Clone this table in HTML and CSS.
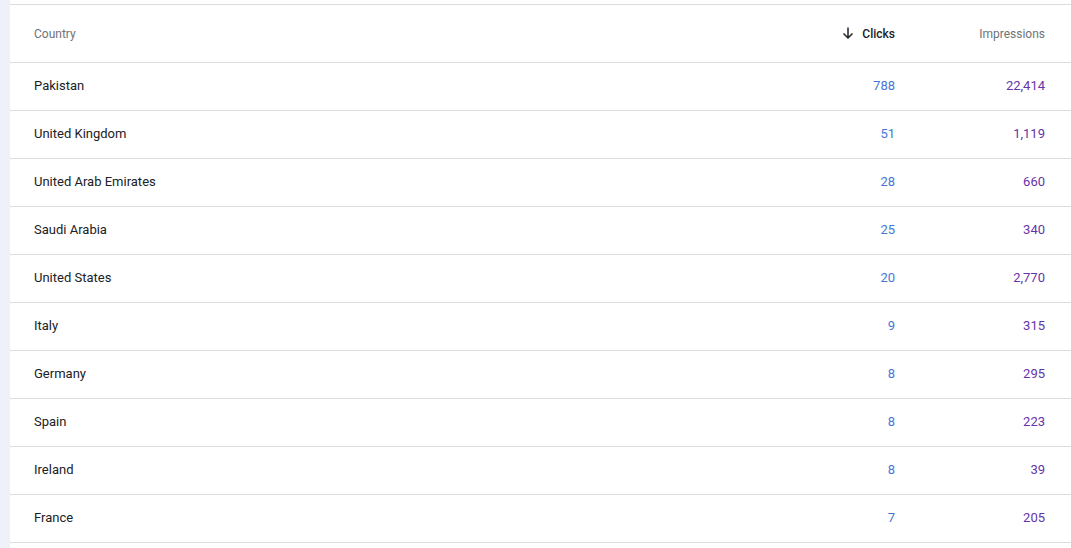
FILE: index.html
```html
<!DOCTYPE html>
<html>
<head>
<meta charset="utf-8">
<link rel="stylesheet" href="styles.css">
</head>
<body>
<div class="page">
  <div class="card">
    <table class="data">
      <thead>
        <tr>
          <th class="col-country">Country</th>
          <th class="col-num sorted"><svg class="arrow" width="14" height="14" viewBox="0 0 14 14"><path d="M7 1.5v10.5M2.5 7.5L7 12l4.5-4.5" fill="none" stroke="#202124" stroke-width="1.5"/></svg>Clicks</th>
          <th class="col-num col-imp">Impressions</th>
        </tr>
      </thead>
      <tbody>
        <tr><td>Pakistan</td><td class="clicks">788</td><td class="imp">22,414</td></tr>
        <tr><td>United Kingdom</td><td class="clicks">51</td><td class="imp">1,119</td></tr>
        <tr><td>United Arab Emirates</td><td class="clicks">28</td><td class="imp">660</td></tr>
        <tr><td>Saudi Arabia</td><td class="clicks">25</td><td class="imp">340</td></tr>
        <tr><td>United States</td><td class="clicks">20</td><td class="imp">2,770</td></tr>
        <tr><td>Italy</td><td class="clicks">9</td><td class="imp">315</td></tr>
        <tr><td>Germany</td><td class="clicks">8</td><td class="imp">295</td></tr>
        <tr><td>Spain</td><td class="clicks">8</td><td class="imp">223</td></tr>
        <tr><td>Ireland</td><td class="clicks">8</td><td class="imp">39</td></tr>
        <tr><td>France</td><td class="clicks">7</td><td class="imp">205</td></tr>
      </tbody>
    </table>
  </div>
</div>
</body>
</html>
```

FILE: styles.css
```css
html, body {
  margin: 0;
  padding: 0;
  background: #eef2f8;
  font-family: Roboto, "Liberation Sans", Arial, sans-serif;
}

.page {
  padding-left: 10px;
  height: 548px;
  overflow: hidden;
}

.card {
  background: #ffffff;
  padding-top: 4px;
  min-height: 544px;
}

.data {
  width: 100%;
  border-collapse: collapse;
  border-top: 1px solid #dadce0;
}

.data th,
.data td {
  border-bottom: 1px solid #dadce0;
  padding: 0;
  white-space: nowrap;
}

.data th {
  height: 57px;
  font-size: 12px;
  font-weight: 400;
  color: #6f7378;
  text-align: left;
}

.data td {
  height: 45px;
  padding-bottom: 2px;
  font-size: 13px;
  color: #202124;
}

.data th.col-country,
.data td:first-child {
  padding-left: 24px;
}

.data th.col-num,
.data td.clicks,
.data td.imp {
  text-align: right;
}

.data th.col-imp,
.data td.imp {
  width: 150px;
  padding-right: 26px;
}

.data th.sorted {
  color: #202124;
  font-weight: 500;
}

.arrow {
  display: inline-block;
  vertical-align: -2px;
  margin-right: 7px;
}

.data td.clicks {
  color: #4677d6;
}

.data td.imp {
  color: #6633aa;
}
```
